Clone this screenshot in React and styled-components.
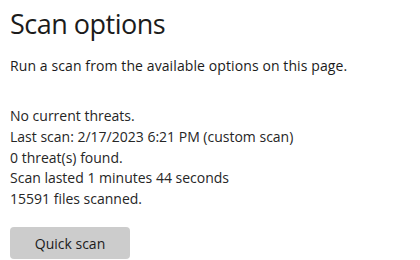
import React from "react";
import styled, { createGlobalStyle } from "styled-components";

const GlobalStyle = createGlobalStyle`
  html, body {
    margin: 0;
    padding: 0;
    background: #ffffff;
  }
  body {
    font-family: "Open Sans", "Noto Sans", sans-serif;
    color: #1b1b1b;
  }
`;

export default function App() {
  return (
    <>
      <GlobalStyle />
      <Page>
        <Title>Scan options</Title>
        <Lead>Run a scan from the available options on this page.</Lead>
        <Status>
          <StatusHead>No current threats.</StatusHead>
          <Line>Last scan: 2/17/2023 6:21 PM (custom scan)</Line>
          <Line>0 threat(s) found.</Line>
          <Line>Scan lasted 1 minutes 44 seconds</Line>
          <Line>15591 files scanned.</Line>
        </Status>
        <Button>Quick scan</Button>
      </Page>
    </>
  );
}

const Page = styled.main`
  padding: 6px 0 0 10px;
  width: 420px;
  height: 260px;
  box-sizing: border-box;
  overflow: hidden;
`;
const Title = styled.h1`
  margin: 0;
  font-size: 27px;
  font-weight: 400;
  line-height: 36px;
  letter-spacing: -0.5px;
`;
const Lead = styled.p`
  margin: 14px 0 0;
  font-size: 14px;
  line-height: 20px;
  letter-spacing: 0.1px;
`;
const Status = styled.div`
  margin-top: 30px;
  font-size: 14px;
  letter-spacing: 0;
  color: #262626;
`;
const StatusHead = styled.div`
  line-height: 20px;
  margin-bottom: 1px;
`;
const Line = styled.div`
  line-height: 20.5px;
`;
const Button = styled.button`
  margin-top: 18px;
  width: 120px;
  height: 32px;
  border: none;
  border-radius: 4px;
  background: #cccccc;
  font-family: inherit;
  font-size: 14px;
  color: #1b1b1b;
  padding: 0;
`;
